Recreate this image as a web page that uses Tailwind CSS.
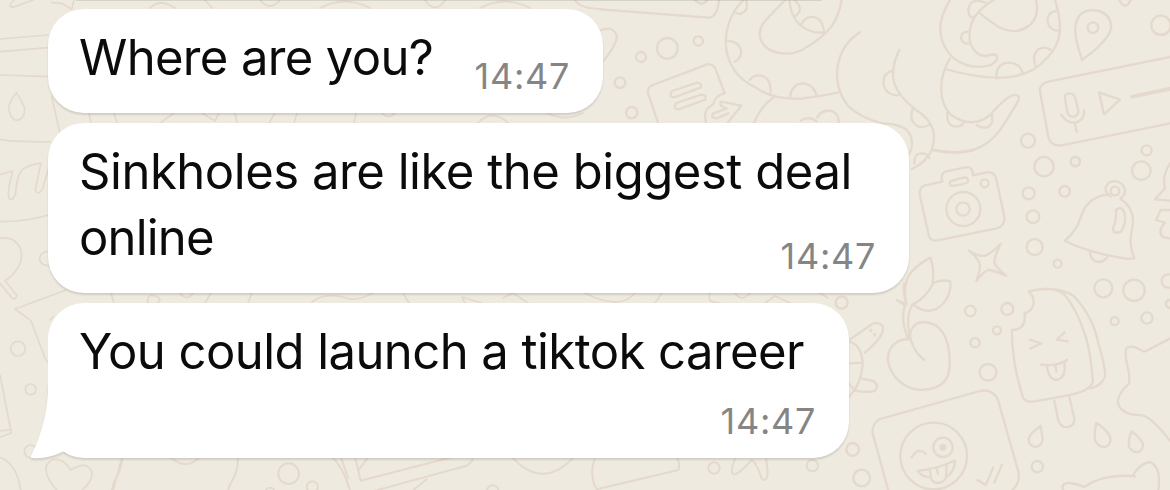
<!DOCTYPE html>
<html lang="en">
<head>
    <meta charset="utf-8">
    <title>Chat</title>
    <script src="https://cdn.jsdelivr.net/npm/@tailwindcss/browser@4"></script>
</head>
<body class="bg-[#eeeadf]">
    <div class="relative w-[1170px] h-[490px] overflow-hidden font-['Inter',sans-serif]">
        <!-- doodle wallpaper -->
        <svg class="absolute inset-0 w-full h-full" viewBox="0 0 1170 490" fill="none" stroke="#e4d9cc" stroke-width="7" stroke-linecap="round" stroke-linejoin="round">
            <!-- note, dots, snake -->
            <g transform="translate(600 0) scale(.33333)">
                <path d="M0 28L325 53Q352 53 357 0M285 0Q305 22 322 0"/>
                <path d="M0 92Q35 75 50 105Q55 125 12 182"/>
                <circle cx="202" cy="145" r="31"/><circle cx="295" cy="123" r="14"/><circle cx="123" cy="171" r="15"/>
                <circle cx="60" cy="248" r="16"/><circle cx="95" cy="338" r="17"/>
                <path d="M174 368L144 280Q140 262 158 255L320 194Q337 190 346 205L374 280Q345 285 339 315Q308 325 318 368"/>
                <path d="M216 273L292 248Q306 249 303 262L222 292Q204 290 216 273ZM229 309L304 284Q321 285 316 299L236 328Q217 327 229 309Z"/>
                <path d="M362 305L424 317L383 368M362 305Q356 318 380 325L340 340Q330 353 350 355L385 340"/>
                <path d="M430 0C350 80 360 215 467 262C510 295 565 298 610 295Q670 287 714 278"/>
                <path d="M556 0C490 65 470 85 482 118C500 165 575 175 622 140C690 100 715 60 725 0"/>
                <path d="M568 0C572 50 600 102 672 98M584 0Q615 30 583 50M602 77Q620 40 652 55Q670 65 672 98M438 0Q448 35 420 42Q410 42 404 36M382 122Q420 125 424 155Q420 180 404 185M449 240Q465 220 490 229Q515 242 511 277M570 292Q575 250 612 250Q642 255 650 288"/>
                <path d="M780 97C705 145 690 245 742 315Q775 350 850 372M520 293Q485 315 462 368M602 362Q625 346 650 364M652 352Q665 328 695 333Q718 342 716 368"/>
            </g>
            <!-- octopus, pin, voice message -->
            <g transform="translate(880 0) scale(.33333)">
                <path d="M58 150C20 230 40 275 104 327C165 365 170 405 155 450Q140 485 95 508M36 213Q10 218 10 250Q15 285 55 286M98 327Q85 365 115 380Q135 384 150 373M0 370Q90 370 95 420Q98 445 88 460M103 490Q102 460 125 460Q145 460 148 474"/>
                <path d="M210 0C165 70 175 130 220 174C260 205 300 203 330 196Q358 182 350 166Q340 160 320 168Q285 170 270 125C260 60 300 25 340 0"/>
                <path d="M300 40C350 80 375 97 410 93C455 85 480 50 468 0M525 0C550 80 545 130 500 175C445 240 350 250 195 207M210 175C170 240 180 310 210 342Q275 390 330 345C370 300 400 275 415 288C425 295 395 335 380 360C340 430 285 475 162 450"/>
                <path d="M318 8Q270 -10 265 30Q265 50 280 54M268 95Q240 95 244 118Q250 133 268 130M532 32Q500 35 503 65Q508 92 536 92M466 197Q455 165 475 148Q495 137 513 150M350 236Q345 190 388 188Q425 192 428 222M202 337Q198 380 230 380Q243 380 250 370M290 376Q325 395 337 365L336 345"/>
                <path d="M606 180Q580 100 587 75Q595 30 640 30Q690 35 694 80Q690 120 606 180Z"/><circle cx="639" cy="83" r="16"/>
                <path d="M718 0Q735 35 752 0"/><circle cx="843" cy="76" r="29"/>
                <path d="M875 170L505 245Q475 252 481 280L505 410Q512 440 545 436L875 369"/>
                <path d="M556 300Q550 280 570 280Q583 281 586 295L595 332Q595 350 578 350Q564 350 562 335ZM544 344Q560 370 585 368Q615 360 612 331M584 369L590 395M657 277L720 299L672 343Z"/>
                <path d="M757 290L875 265" stroke-width="12"/>
                <circle cx="444" cy="422" r="21"/><circle cx="492" cy="500" r="29"/><circle cx="586" cy="485" r="14"/><circle cx="800" cy="451" r="15"/>
            </g>
            <!-- camera, star, bell -->
            <g transform="translate(900 150) scale(.33333)">
                <path d="M100 0Q160 15 222 0"/>
                <path d="M127 95L75 106Q55 112 60 138L86 255Q92 275 112 271L290 235Q315 228 313 200L289 88Q284 65 262 67L219 76Q218 47 197 52L138 64Q119 70 127 95Z"/>
                <path d="M152 93L193 82Q206 82 204 95Q204 100 158 108Q143 107 152 93Z"/>
                <circle cx="190" cy="177" r="51"/><circle cx="189" cy="177" r="20"/><circle cx="254" cy="100" r="12"/>
                <path d="M207 302Q240 323 258 316Q280 305 302 281Q280 325 284 340Q290 355 319 377Q280 360 264 360Q250 365 229 393Q243 355 239 342Q235 325 207 302Z"/>
                <path d="M497 270C550 225 535 190 565 160Q590 135 630 133M662 148Q700 170 699 220C692 260 685 280 703 324Q690 330 645 320Q545 300 495 272M570 303Q570 335 600 336Q615 333 622 320M632 140C600 115 625 92 647 94C675 97 685 130 662 145"/>
                <circle cx="645" cy="123" r="13"/>
                <path d="M648 180Q665 165 674 190Q680 225 662 245Q640 255 639 235Q650 210 648 180Z"/>
                <circle cx="526" cy="34" r="14"/><circle cx="386" cy="130" r="18"/><circle cx="494" cy="124" r="16"/><circle cx="399" cy="200" r="19"/><circle cx="404" cy="291" r="24"/><circle cx="473" cy="341" r="12"/><circle cx="610" cy="415" r="27"/><circle cx="702" cy="421" r="32"/><circle cx="724" cy="62" r="28"/><circle cx="805" cy="393" r="20"/><circle cx="808" cy="461" r="11"/>
                <path d="M810 40Q785 80 795 115L765 148L810 152M810 180L782 180L768 210L795 218Q770 245 790 262L810 265"/>
                <path d="M20 462Q5 400 35 365Q65 335 91 323Q105 360 97 405Q80 440 37 465M103 398Q130 387 151 395Q155 430 130 460Q95 500 45 468M20 462L0 455M20 462Q8 430 12 400"/>
            </g>
            <!-- cherry, lolly, emoji card -->
            <g transform="translate(840 300) scale(.33333)">
                <circle cx="5" cy="8" r="18"/>
                <path d="M28 120L100 70Q135 65 128 95Q120 120 75 158M28 125Q65 135 68 190Q65 250 28 290M28 190L65 188M63 235L100 243Q120 255 105 272Q85 280 44 271M28 252L43 270"/>
                <circle cx="92" cy="92" r="2"/><circle cx="104" cy="104" r="2"/>
                <path d="M170 0L195 17Q180 60 205 118M218 12Q195 50 211 120M205 118C165 115 140 150 144 185C155 235 200 275 255 269C310 265 330 235 329 190C330 110 300 65 248 66C215 70 205 100 213 122Q225 160 253 180"/>
                <circle cx="391" cy="33" r="16"/><circle cx="471" cy="91" r="12"/><circle cx="405" cy="128" r="14"/><circle cx="502" cy="27" r="18"/><circle cx="444" cy="217" r="25"/><circle cx="824" cy="63" r="12"/><circle cx="921" cy="54" r="17"/><circle cx="592" cy="500" r="17"/><circle cx="38" cy="448" r="19"/><circle cx="65" cy="534" r="25"/><circle cx="990" cy="12" r="12"/>
                <path d="M545 280Q550 308 580 305L680 287Q765 272 758 235Q750 140 730 90Q710 30 675 -15Q640 -45 566 -26Q588 -5 578 20Q572 36 554 39Q560 90 516 90Q515 180 545 280ZM566 -26Q650 -45 700 -13Q760 50 775 130Q800 215 794 232Q785 255 754 265"/>
                <path d="M569 119L603 130L571 146M674 97L650 119L683 124M603 194Q650 200 681 180M621 197Q625 240 652 240Q680 230 673 188M646 197L649 214M643 302L655 362Q665 385 685 381Q705 375 703 355L688 291"/>
                <path d="M602 378Q562 405 566 425Q575 443 592 440Q613 430 606 405ZM769 368Q760 415 767 425Q780 445 798 440Q818 430 808 405Q795 385 769 368ZM874 394Q862 430 868 442Q880 460 898 455Q912 445 908 430Q900 412 874 394Z"/>
                <path d="M990 116C930 145 920 155 912 155Q870 130 858 146C850 185 875 215 867 250Q830 285 834 310Q845 345 900 345Q930 345 990 422"/>
                <path d="M145 572L98 400Q95 370 120 357L420 273Q458 265 474 300L535 515Q542 550 515 572"/>
                <circle cx="281" cy="468" r="100"/><circle cx="309" cy="442" r="29"/><circle cx="309" cy="442" r="7" fill="#e4d9cc"/>
                <path d="M215 472Q235 440 257 461M233 513Q300 505 345 481Q345 515 320 530Q310 550 292 549Q275 545 272 533Q245 530 233 513ZM268 506L274 535M290 503L294 522M320 495L318 530M412 540L437 555L460 502M463 548L486 494"/>
                <path d="M670 572Q660 548 690 549Q715 552 733 561Q790 520 885 529M878 527Q900 490 930 486Q965 500 955 572"/>
            </g>
            <!-- left edge -->
            <g transform="scale(.33333)" stroke-width="5">
                <path d="M42 0Q20 20 40 22Q70 10 100 0M155 8L185 10L215 28L222 0M0 117L145 105M0 155L145 143M0 225L145 230M155 290L180 400M0 418Q20 425 150 426"/>
                <path d="M49 278Q20 315 28 335Q35 360 52 361Q75 355 74 325Q65 300 49 278ZM0 524L38 513Q20 580 27 595Q40 605 47 580Q50 520 72 505Q100 490 123 490Q110 545 106 570Q115 590 128 565L147 500M0 665Q80 665 145 645"/>
                <path d="M0 715C50 705 75 750 60 790Q45 825 15 842L50 885Q50 900 38 896L0 850M145 755Q118 755 119 778Q122 797 150 797"/>
                <path d="M198 870L45 927L93 962L135 1075L150 1095M150 960L160 950M0 1125L34 1298L0 1312M0 1292L32 1290M0 1372Q50 1390 62 1470"/>
                <circle cx="54" cy="1046" r="22"/><circle cx="92" cy="1168" r="16"/><circle cx="92" cy="1354" r="19"/>
                <path d="M170 1470Q130 1425 140 1395Q155 1370 185 1382Q200 1390 212 1410Q235 1395 255 1396Q285 1410 272 1440Q260 1460 245 1472M362 1385L340 1470"/>
            </g>
            <!-- strip under the last bubble -->
            <g transform="translate(100 440) scale(.33333)" stroke-width="6">
                <path d="M66 50Q65 85 48 115Q38 130 36 152M210 50Q260 95 300 50M414 50Q415 95 395 125Q385 140 385 152M695 50Q730 80 750 152M722 50L745 115M765 50L782 122L1080 45M776 90L802 55M825 152L1100 77Q1120 65 1118 50M980 118L938 152"/>
                <circle cx="566" cy="101" r="31"/><circle cx="637" cy="141" r="17"/><circle cx="510" cy="158" r="15"/><circle cx="1178" cy="153" r="17"/>
                <path d="M1235 50Q1325 150 1418 55M1486 50Q1465 105 1490 148L1735 90Q1742 65 1728 50M1908 50Q1890 90 1898 102Q1910 110 1955 60Q1970 70 1985 115Q2002 130 2003 95L1998 50"/>
                <circle cx="1842" cy="84" r="17"/><circle cx="2137" cy="77" r="17"/>
            </g>
            <!-- slivers between bubbles -->
            <g stroke-width="1.8">
                <path d="M89 113L91 123M114 113L117 123M160 123L174 113M202 113L215 121L219 113M235 113L237 123M275 113L269 123M297 113L294 123M356 113L354 123M382 113Q388 120 395 113M478 123Q492 108 508 123M547 113Q565 122 583 113"/>
                <path d="M111 293L114 303M148 303Q146 292 158 297Q162 301 157 303M180 293Q187 302 193 293M205 303L211 293M252 293L248 303M312 302Q325 291 350 299Q360 300 373 293M403 293L409 303M465 303L462 297L482 303M503 298L513 293L528 303M585 293Q620 311 635 293M655 303L662 293M710 293Q706 303 720 303M735 293Q742 303 750 293M765 303L775 296L790 303M820 293L828 298"/>
                <path d="M150 8Q160 -2 175 8M205 0L212 8M260 0Q270 12 280 0M320 8Q345 -5 370 8M425 0Q435 15 445 0M480 8Q505 -5 530 8M575 0Q580 9 603 9"/>
            </g>
        </svg>
        <!-- bottom edge of the previous bubble's shadow -->
        <div class="absolute top-0 left-[76px] w-[746px] h-px bg-black/10"></div>

        <div class="relative flex flex-col items-start pl-12 pt-[9px] gap-[10px]">
            <div class="flex justify-between w-[555px] h-[104px] pl-[31px] pr-[33px] bg-white rounded-[36px] shadow-[0_2px_2px_rgba(0,0,0,0.12)]">
                <p class="pt-[16px] text-[49px] leading-[66px] tracking-[-0.65px] text-[#0b0b0b] whitespace-nowrap">Where are you?</p>
                <span class="self-end pb-[15px] text-[36px] leading-[44px] tracking-[0.7px] text-[#858585]">14:47</span>
            </div>
            <div class="flex justify-between w-[861px] h-[170px] pl-[31px] pr-[33px] bg-white rounded-[36px] shadow-[0_2px_2px_rgba(0,0,0,0.12)]">
                <p class="w-0 pt-[16px] text-[49px] leading-[66px] tracking-[-0.46px] text-[#0b0b0b] whitespace-nowrap">Sinkholes are like the biggest deal<br><span class="tracking-[-0.8px]">online</span></p>
                <span class="self-end pb-[15px] text-[36px] leading-[44px] tracking-[0.7px] text-[#858585]">14:47</span>
            </div>
            <div class="relative">
                <!-- bubble tail -->
                <svg class="absolute -left-[18px] bottom-0 w-[50px] h-[75px] overflow-visible drop-shadow-[0_2px_1px_rgba(0,0,0,0.12)]" viewBox="0 0 50 75">
                    <path fill="#fff" d="M18 0Q19 36 1 73Q0 75 3 75Q18 76 32 69L50 60V0Z"/>
                </svg>
                <div class="relative flex justify-between w-[801px] h-[155px] pl-[31px] pr-[33px] bg-white rounded-[36px]">
                    <div class="absolute inset-0 rounded-[36px] shadow-[0_2px_2px_rgba(0,0,0,0.12)] [clip-path:inset(0_-4px_-4px_16px)]"></div>
                    <p class="w-0 pt-[16px] text-[49px] leading-[66px] tracking-[-0.55px] text-[#0b0b0b] whitespace-nowrap">You could launch a tiktok career</p>
                    <span class="self-end pb-[15px] text-[36px] leading-[44px] tracking-[0.7px] text-[#858585]">14:47</span>
                </div>
            </div>
        </div>
    </div>
</body>
</html>
